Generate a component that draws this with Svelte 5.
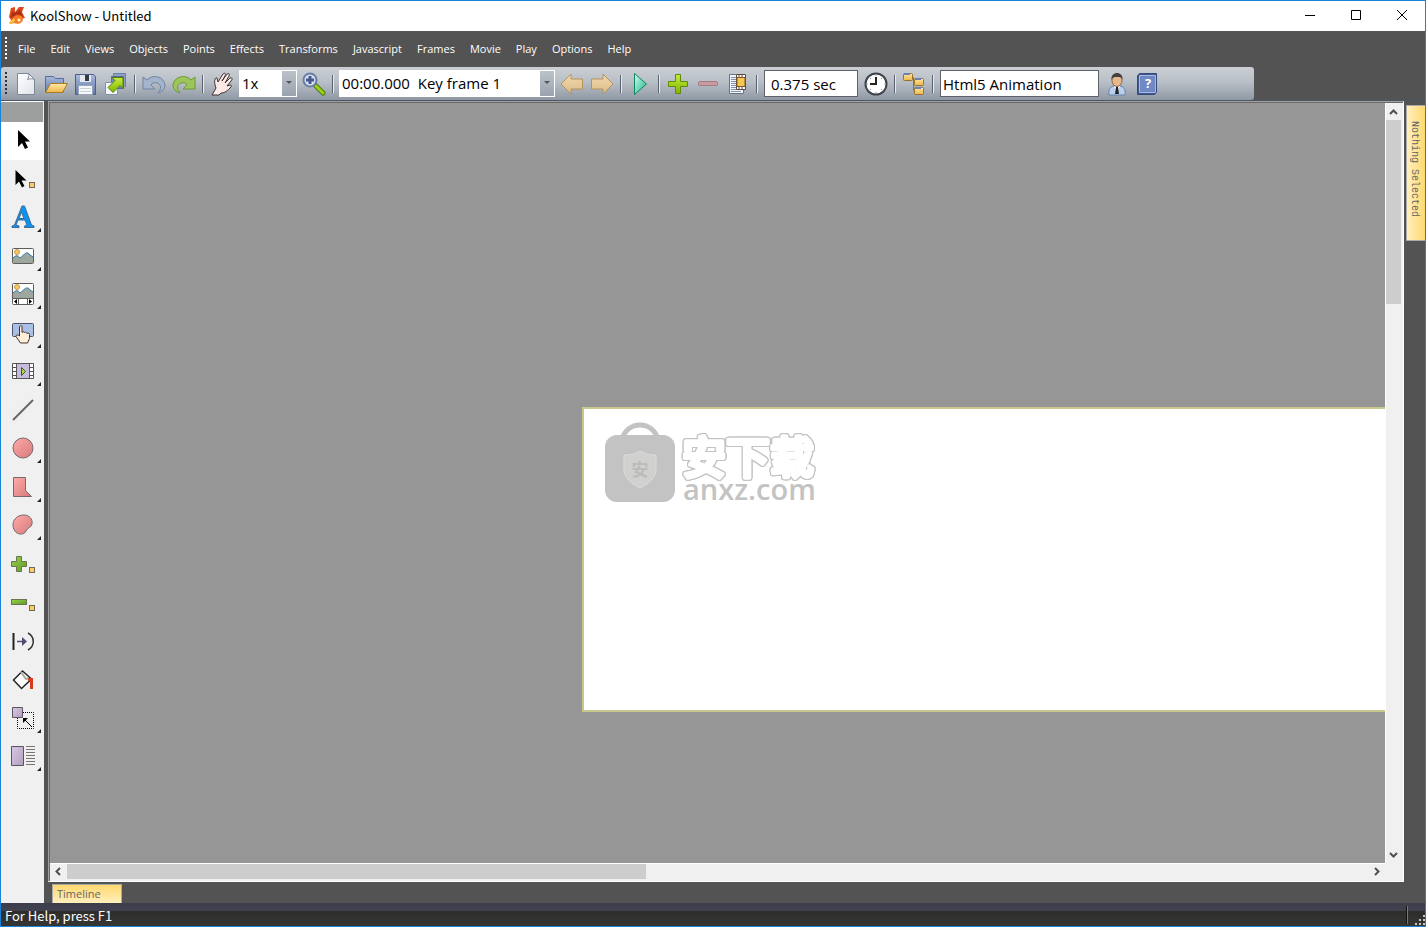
<script>
	const menus = [
		'File', 'Edit', 'Views', 'Objects', 'Points', 'Effects', 'Transforms',
		'Javascript', 'Frames', 'Movie', 'Play', 'Options', 'Help'
	];

	const zooms = ['1x', '2x', '4x', '8x'];
	const frames = ['00:00.000\u00a0\u00a0Key frame 1'];

	let zoom = $state('1x');
	let frame = $state(frames[0]);
	let duration = $state('0.375 sec');
	let target = $state('Html5 Animation');
	let activeTool = $state('Select');
</script>

<!-- shared gradients -->
<svg class="defs" width="0" height="0" aria-hidden="true">
	<defs>
		<linearGradient id="g-paper" x2="1" y2="1"><stop stop-color="#fff" /><stop offset="1" stop-color="#dfe3ea" /></linearGradient>
		<linearGradient id="g-folder" x2="0" y2="1"><stop stop-color="#ffe9a6" /><stop offset="1" stop-color="#eeb54a" /></linearGradient>
		<linearGradient id="g-steel" x2="0" y2="1"><stop stop-color="#a9b9dc" /><stop offset="1" stop-color="#5f78ad" /></linearGradient>
		<linearGradient id="g-lime" x2="0" y2="1"><stop stop-color="#c8ea3c" /><stop offset="1" stop-color="#7fb800" /></linearGradient>
		<linearGradient id="g-play" x2="1" y2="1"><stop stop-color="#d4fff0" /><stop offset="1" stop-color="#12b383" /></linearGradient>
		<linearGradient id="g-sand" x2="0" y2="1"><stop stop-color="#efd9b0" /><stop offset="1" stop-color="#dcbb86" /></linearGradient>
		<linearGradient id="g-pink" x2="1" y2="1"><stop stop-color="#ffaaa9" /><stop offset="1" stop-color="#d67a7b" /></linearGradient>
		<linearGradient id="g-lilac" x2="1" y2="1"><stop stop-color="#d9c8e2" /><stop offset="1" stop-color="#b19fc0" /></linearGradient>
		<linearGradient id="g-leaf" x2="1" y2="1"><stop stop-color="#9bd24c" /><stop offset="1" stop-color="#5a9a24" /></linearGradient>
	</defs>
</svg>

{#snippet iconNew()}
	<path d="M3.500 1.500h11l6 6v15h-17z" fill="url(#g-paper)" stroke="#7d8795" />
	<path d="M14.500 1.500c1 3 0 4-1 6 3-1 5-1 7 0z" fill="#fff" stroke="#7d8795" />
{/snippet}
{#snippet iconOpen()}
	<path d="M1.500 20V4.500h8l2 2h8V20z" fill="url(#g-steel)" stroke="#566c9c" />
	<path d="M1.500 20.500l5-9h17l-5 9z" fill="url(#g-folder)" stroke="#a87c25" />
{/snippet}
{#snippet iconSave()}
	<path d="M1.500 2.500h18l2 2v18h-20z" fill="url(#g-steel)" stroke="#4d5f88" />
	<path d="M6 3h11v7H6z" fill="#e4e8ee" /><path d="M11 3h4v6h-4z" fill="#333b48" />
	<path d="M4.500 13.500h14v9h-14z" fill="#f6f7f9" stroke="#99a4b8" />
	<path d="M6 16.500h11M6 19.500h11" stroke="#cbd1db" />
{/snippet}
{#snippet iconExport()}
	<path d="M9.500 1.500h12v13h-12z" fill="#8d9fc4" stroke="#6b7fa8" />
	<path d="M7.500 4.500h12v12h-12z" fill="#7189b8" stroke="#536c9d" />
	<path d="M1.500 10.500h12v12h-12z" fill="#f4f6f9" stroke="#8190ab" />
	<path d="M8 5.500h11v11l-3-3-7 7-5-5 7-7z" fill="url(#g-lime)" stroke="#52800a" />
{/snippet}
{#snippet iconUndo()}
	<path d="M1 5l4 3c5-6 17-4 18 5 0 4-3 7-7 8 4-4 3-9-1-10-3-1-5 0-6 2l4 4H1z" fill="#a5b4cd" stroke="#71839f" />
{/snippet}
{#snippet iconRedo()}
	<path d="M23 5l-4 3C14 2 2 4 1 13c0 4 3 7 7 8-4-4-3-9 1-10 3-1 5 0 6 2l-4 4h12z" fill="#9dc65a" stroke="#6d9a38" />
{/snippet}
{#snippet iconHand()}
	<path d="M2 23l4-7-1-3c-1-4 0-8 2-7l1 4 5-8c2-2 3 0 2 2l-3 5 5-7c2-1 3 0 2 2l-4 7 5-5c2-1 3 1 1 3l-4 5 3-1c2 0 2 1 0 3-4 4-6 5-9 5l-2 2z" fill="#fde9e6" stroke="#3a3434" />
{/snippet}
{#snippet iconZoom()}
	<path d="M14 14l7 7" stroke="#4b7a0c" stroke-width="5" stroke-linecap="round" />
	<path d="M14 14l7 7" stroke="#9ad21a" stroke-width="3" stroke-linecap="round" />
	<circle cx="8" cy="8" r="6.500" fill="#d5e0f2" stroke="#6a7ca4" stroke-width="2" />
	<path d="M8 4v8M4 8h8" stroke="#46588c" stroke-width="3" />
{/snippet}
{#snippet iconPrev()}
	<path d="M1 12L11 2v5h11.500v10H11v5z" fill="url(#g-sand)" stroke="#b5935d" />
{/snippet}
{#snippet iconNext()}
	<path d="M23 12L13 2v5H1.500v10H13v5z" fill="url(#g-sand)" stroke="#b5935d" />
{/snippet}
{#snippet iconPlay()}
	<path d="M6.500 1.500L18.500 12 6.500 22.500z" fill="url(#g-play)" stroke="#11835f" stroke-linejoin="round" />
{/snippet}
{#snippet iconPlus()}
	<path d="M9.500 2.500h5v7h7v5h-7v7h-5v-7h-7v-5h7z" fill="url(#g-lime)" stroke="#5c8c08" />
{/snippet}
{#snippet iconMinus()}
	<rect x="2.500" y="9.500" width="19" height="4" rx="1" fill="#c99a9e" stroke="#a27b82" />
{/snippet}
{#snippet iconFrames()}
	<path d="M3.500 2.500h14v19h-14z" fill="#f2f4f7" stroke="#6a7280" />
	<path d="M5 5.500h5M5 7.500h5M5 9.500h5M5 11.500h5M5 13.500h5M5 15.500h5M5 17.500h10M5 19.500h10" stroke="#7f91ae" />
	<path d="M10.500 2.500h9v15h-9z" fill="#fff" stroke="#5c4a3c" />
	<path d="M11 5.500h8v9h-8z" fill="#f9c74d" stroke="#7c5b2a" />
	<path d="M13 3v2M16 3v2M13 15v2M16 15v2" stroke="#5c4a3c" />
{/snippet}
{#snippet iconClock()}
	<circle cx="12" cy="12" r="10.500" fill="#fff" stroke="#3e444c" stroke-width="2" />
	<path d="M12 5v7H6" fill="none" stroke="#222" stroke-width="2" />
	<path d="M12 2v2M22 12h-2M12 22v-2M2 12h2M18 6l-1 1M18 18l-1-1M6 18l1-1M6 6l1 1" stroke="#999" />
{/snippet}
{#snippet iconTree()}
	<path d="M9 5.500h2.500v13H14M11 10.500h3" fill="none" stroke="#6e7686" />
	{#each [[1, 1], [12, 6], [12, 15]] as [x, y]}
		<rect x={x + 0.5} y={y + 0.5} width="9" height="7" rx="1" fill="url(#g-folder)" stroke="#9a722b" />
		<path d="M{x + 1} {y + 1}h6" stroke="#6b81b4" stroke-width="2" />
	{/each}
{/snippet}
{#snippet iconUser()}
	<path d="M4 23c-1-6 2-9 5-9h6c3 0 6 3 5 9z" fill="#b9cdec" stroke="#6780ad" />
	<path d="M9 14l3 8 3-8z" fill="#fff" /><path d="M11 15h2l1 7h-4z" fill="#20242c" />
	<ellipse cx="12" cy="8.500" rx="5" ry="6" fill="#e6b68c" stroke="#8d6745" />
	<path d="M6.500 8C6 3 9 1 12 1s6 2 5.500 7c-1-3-2-3-5.500-3S8 5 6.500 8z" fill="#45403d" />
{/snippet}
{#snippet iconHelp()}
	<path d="M2.500 3.500l2-2h17v19l-2 2h-17z" fill="#41598f" stroke="#34497c" />
	<path d="M4.500 3.500h16v17h-16z" fill="#7089c2" stroke="#a7b9df" />
	<text x="13" y="16" text-anchor="middle" class="qmark">?</text>
{/snippet}

{#snippet node()}
	<rect x="18.500" y="15.500" width="5" height="5" fill="#ffcb5e" stroke="#6f6a5c" />
{/snippet}
{#snippet toolSelect()}
	<path d="M7 2v17l4-4 3 6 3-1.500-3-6h5z" fill="#000" />
{/snippet}
{#snippet toolPoint()}
	<path d="M4.500 3v15L8 14.500l3 6 2.500-1.500-3-5.500h5z" fill="#000" />
	{@render node()}
{/snippet}
{#snippet toolText()}
	<path d="M11 1h2.500l7 19 2.500 1v1.500h-9.500V21l2.500-1-2-5H7l-2 5 3 1v1.500H1V21l2.500-1zM10.500 7L8 13.500h5z" fill="#0a92f5" fill-rule="evenodd" stroke="#3f6c92" />
{/snippet}
{#snippet toolImage()}
	<rect x="1.500" y="4.500" width="21" height="15" rx="1" fill="#fff" stroke="#5d5d5d" />
	<circle cx="6" cy="8" r="2.500" fill="#f9c865" stroke="#c79d52" />
	<path d="M2 14c3-3 5-3 7 0 4-3 7-8 10-3l3 2v6H2z" fill="#9da79d" />
	<path d="M2 14c3-3 5-3 7 0 4-3 7-8 10-3l3 2" fill="none" stroke="#3177ae" />
{/snippet}
{#snippet toolSlider()}
	<rect x="1.500" y="1.500" width="21" height="21" rx="1" fill="#fff" stroke="#5d5d5d" />
	<circle cx="6" cy="5" r="2.500" fill="#f9c865" stroke="#c79d52" />
	<path d="M2 11c3-3 5-3 7 0 4-3 7-8 10-3l3 2v6H2z" fill="#9da79d" />
	<path d="M2 11c3-3 5-3 7 0 4-3 7-8 10-3l3 2" fill="none" stroke="#3177ae" />
	<path d="M2 16.500h20M7.500 17v5M16.500 17v5" stroke="#5d5d5d" />
	<path d="M6 17v5l-3-2.500zM18 17v5l3-2.500z" fill="#000" />
{/snippet}
{#snippet toolButton()}
	<rect x="1.500" y="2.500" width="21" height="13" rx="1" fill="#a9bfe6" stroke="#4c566b" />
	<path d="M8.500 5.500c1-1 2.500-1 2.500 0v6c1-1 2-1 2.500 0 1-1 2 0 2.500 1 2-1 2.500 0 2.500 1v4l-2 4.500h-7L5 15.500c0-2 2-2 3.500-.5z" fill="#ffeeda" stroke="#40332a" />
{/snippet}
{#snippet toolMovie()}
	<path d="M1.500 4.500h21v15h-21z" fill="#fff" stroke="#555" />
	<path d="M6 5h12v14H6z" fill="#c6bbdf" />
	<path d="M5.500 5v14M18.500 5v14M2 8.500h3M2 12.500h3M2 16.500h3M19 8.500h3M19 12.500h3M19 16.500h3" stroke="#555" />
	<path d="M10.500 8.500l4 4-4 4z" fill="#a4d84b" stroke="#3f5b22" />
{/snippet}
{#snippet toolLine()}
	<path d="M2 22L22 2" stroke="#6b6466" stroke-width="2" />
{/snippet}
{#snippet toolEllipse()}
	<circle cx="12" cy="12" r="10" fill="url(#g-pink)" stroke="#756a6a" />
{/snippet}
{#snippet toolPolygon()}
	<path d="M2.500 2.500h12v13l6 6h-18z" fill="url(#g-pink)" stroke="#756a6a" />
{/snippet}
{#snippet toolBlob()}
	<path d="M2 12C2 5 8 2 13 2s9 4 8 9c-1 4-4 3-6 7-1 3-5 4-9 2-3-2-4-5-4-8z" fill="url(#g-pink)" stroke="#756a6a" />
{/snippet}
{#snippet toolAdd()}
	<path d="M5.500 4.500h5v5h5v5h-5v5h-5v-5h-5v-5h5z" fill="url(#g-leaf)" stroke="#68754f" />
	{@render node()}
{/snippet}
{#snippet toolRemove()}
	<rect x="0.500" y="9.500" width="15" height="5" fill="url(#g-leaf)" stroke="#68754f" />
	{@render node()}
{/snippet}
{#snippet toolMorph()}
	<path d="M2.500 4v17" stroke="#222" stroke-width="2" />
	<path d="M6 12.500h7" stroke="#534b74" stroke-width="1.500" /><path d="M11 8v9l5-4.500z" fill="#534b74" />
	<path d="M17 4c7 4 7 13 0 17" fill="none" stroke="#333" stroke-width="1.500" />
{/snippet}
{#snippet toolFill()}
	<path d="M2.500 13l9-9 9 8-10 9.500z" fill="#fff" stroke="#222" stroke-width="1.500" />
	<path d="M10 5l5 7 3-1" fill="none" stroke="#aaa" stroke-width="2" />
	<path d="M17 12.500h3.500V22" fill="none" stroke="#d93b1f" stroke-width="3" />
{/snippet}
{#snippet toolResize()}
	<path d="M6.500 6.500h16v16h-16z" fill="none" stroke="#000" stroke-dasharray="1 1" stroke-dashoffset="0.500" />
	<path d="M1.500 1.500h10v10h-10z" fill="url(#g-lilac)" stroke="#5b5363" />
	<path d="M13 13l8 8" stroke="#000" /><path d="M12 12h5l-5 5z" fill="#000" />
{/snippet}
{#snippet toolWrap()}
	<path d="M0.500 2.500h12v19h-12z" fill="url(#g-lilac)" stroke="#5b5363" />
	<path d="M15 2.500h9M15 5.500h9M15 8.500h9M15 11.500h9M15 14.500h9M15 17.500h9M15 20.500h9" stroke="#7d7470" />
{/snippet}

{#snippet action(label, icon)}
	<button class="action" type="button" aria-label={label}>
		<svg width="24" height="24" viewBox="0 0 24 24">{@render icon()}</svg>
	</button>
{/snippet}

{#snippet tool(label, icon, flyout)}
	<button
		class="tool"
		class:active={activeTool === label}
		type="button"
		aria-label={label}
		onclick={() => (activeTool = label)}
	>
		<svg width="24" height="24" viewBox="0 0 24 24" overflow="visible">{@render icon()}</svg>
		{#if flyout}<span class="flyout"></span>{/if}
	</button>
{/snippet}

{#snippet chevron(d)}
	<svg width="17" height="17" viewBox="0 0 17 17"><path {d} fill="none" stroke="#505050" stroke-width="2" /></svg>
{/snippet}

<div class="window">
	<header class="titlebar">
		<svg width="18" height="18" viewBox="0 0 18 18" aria-hidden="true">
			<path d="M3 1l4-1v5l4-5h5l-2 5 3 6-4 1-4-1-6 2-2-3z" fill="#d9481c" />
			<path d="M4 5l3 1 5-3 3 7-6-3-6 4z" fill="#a92f14" />
			<path d="M1 16l5-6c3-3 9-2 9 2s-5 6-9 4l-3 1z" fill="#f57c22" />
			<path d="M1 16l5-5 1 3-4 3z" fill="#ffc23c" />
			<circle cx="11" cy="13" r="1.500" fill="#fff0d8" />
		</svg>
		<h1>KoolShow - Untitled</h1>
		<div class="caption">
			<button type="button" aria-label="Minimize"><svg width="12" height="12" viewBox="0 0 12 12"><path d="M1 5.500h10" stroke="#000" /></svg></button>
			<button type="button" aria-label="Maximize"><svg width="12" height="12" viewBox="0 0 12 12"><path d="M1.500 0.500h9v9h-9z" fill="none" stroke="#000" /></svg></button>
			<button type="button" aria-label="Close"><svg width="12" height="12" viewBox="0 0 12 12"><path d="M1 0l10 10M11 0L1 10" stroke="#000" /></svg></button>
		</div>
	</header>

	<nav class="menubar">
		<span class="grip light"></span>
		{#each menus as item (item)}
			<button type="button">{item}</button>
		{/each}
	</nav>

	<div class="toolstrip">
		<div class="toolbar">
			<span class="grip"></span>
			{@render action('New', iconNew)}
			{@render action('Open', iconOpen)}
			{@render action('Save', iconSave)}
			{@render action('Export', iconExport)}
			<span class="sep"></span>
			{@render action('Undo', iconUndo)}
			{@render action('Redo', iconRedo)}
			<span class="sep"></span>
			{@render action('Pan', iconHand)}
			<span class="combo zoom">
				<select aria-label="Zoom" bind:value={zoom}>
					{#each zooms as z (z)}<option value={z}>{z}</option>{/each}
				</select>
			</span>
			{@render action('Zoom in', iconZoom)}
			<span class="sep"></span>
			<span class="combo frames">
				<select aria-label="Key frame" bind:value={frame}>
					{#each frames as f (f)}<option value={f}>{f}</option>{/each}
				</select>
			</span>
			{@render action('Previous frame', iconPrev)}
			{@render action('Next frame', iconNext)}
			<span class="sep"></span>
			{@render action('Play', iconPlay)}
			<span class="sep"></span>
			{@render action('Add frame', iconPlus)}
			{@render action('Remove frame', iconMinus)}
			{@render action('Frame list', iconFrames)}
			<span class="sep"></span>
			<input class="duration" aria-label="Duration" bind:value={duration} />
			{@render action('Timing', iconClock)}
			<span class="sep"></span>
			{@render action('Object tree', iconTree)}
			<span class="sep"></span>
			<input class="target" aria-label="Output" bind:value={target} />
			{@render action('Account', iconUser)}
			{@render action('Help contents', iconHelp)}
		</div>
	</div>

	<main>
		<aside class="toolbox">
			<div class="handle"></div>
			{@render tool('Select', toolSelect, false)}
			{@render tool('Edit points', toolPoint, false)}
			{@render tool('Text', toolText, true)}
			{@render tool('Image', toolImage, true)}
			{@render tool('Slider', toolSlider, true)}
			{@render tool('Button', toolButton, true)}
			{@render tool('Movie', toolMovie, true)}
			{@render tool('Line', toolLine, false)}
			{@render tool('Ellipse', toolEllipse, true)}
			{@render tool('Polygon', toolPolygon, true)}
			{@render tool('Curve', toolBlob, true)}
			{@render tool('Add point', toolAdd, false)}
			{@render tool('Remove point', toolRemove, false)}
			{@render tool('Bend', toolMorph, false)}
			{@render tool('Fill', toolFill, false)}
			{@render tool('Resize', toolResize, true)}
			{@render tool('Text wrap', toolWrap, true)}
		</aside>

		<section class="work">
			<div class="view">
				<div class="canvas">
					<div class="stage">
						<div class="logo">
							<svg width="72" height="82" viewBox="0 0 72 82" aria-hidden="true">
								<path d="M18 18C22-2 50-2 54 18" fill="none" stroke="#c3c3c3" stroke-width="5" />
								<rect x="1" y="13" width="70" height="67" rx="12" fill="#c3c3c3" />
								<path d="M36 29c5 3 10 4 16 4v15c0 8-8 14-16 18-8-4-16-10-16-18V33c6 0 11-1 16-4z" fill="#d0d0ce" stroke="#dcdcda" />
								<text x="36" y="54" text-anchor="middle" class="seal">安</text>
							</svg>
							<div class="brand">
								<svg width="138" height="44" viewBox="0 0 138 44" overflow="visible">
									<text x="2" y="40" class="cn">安下载</text>
								</svg>
								<span class="site">anxz.com</span>
							</div>
						</div>
					</div>
				</div>
				<div class="scroll vertical">
					{@render chevron('M4 11l3.500-3.500L11 11')}
					<div class="track"><div class="thumb"></div></div>
					{@render chevron('M4 7l3.500 3.500L11 7')}
				</div>
				<div class="scroll horizontal">
					{@render chevron('M10 4L6.500 7.500 10 11')}
					<div class="track"><div class="thumb"></div></div>
					{@render chevron('M7 4l3.500 3.500L7 11')}
				</div>
			</div>
			<div class="tabs"><button type="button">Timeline</button></div>
		</section>

		<aside class="dock"><button type="button">Nothing Selected</button></aside>
	</main>

	<footer>
		<span>For Help, press F1</span>
		<svg width="20" height="23" viewBox="0 0 20 23" aria-hidden="true">
			<path d="M1.500 3v18" stroke="#111" /><path d="M2.500 3v18" stroke="#77797c" />
			<path d="M18 12h2v2h-2zM14 16h2v2h-2zM18 16h2v2h-2zM10 20h2v2h-2zM14 20h2v2h-2zM18 20h2v2h-2z" fill="#c9c7c0" />
		</svg>
	</footer>
</div>

<style>
	.defs {
		position: absolute;
	}

	.window {
		box-sizing: border-box;
		min-height: 100vh;
		display: flex;
		flex-direction: column;
		border: 1px solid #1883d7;
		background: #535353;
		font-family: "Open Sans", "Noto Sans CJK SC", sans-serif;
		font-size: 12px;
		color: #000;
	}

	button,
	input,
	select {
		box-sizing: border-box;
		margin: 0;
		padding: 0;
		border: 0;
		border-radius: 0;
		background: none;
		font: inherit;
		color: inherit;
	}

	svg {
		display: block;
		flex: none;
	}

	/* title bar */
	.titlebar {
		height: 30px;
		padding-left: 7px;
		display: flex;
		align-items: center;
		gap: 4px;
		background: #fff;
	}

	h1 {
		margin: 0;
		flex: 1;
		font-family: "Noto Sans CJK SC", sans-serif;
		font-size: 13px;
		line-height: 16px;
		font-weight: 400;
	}

	.caption {
		display: flex;
	}

	.caption button {
		width: 46px;
		height: 30px;
		display: grid;
		place-items: center;
	}

	/* menu */
	.menubar {
		height: 36px;
		display: flex;
		align-items: center;
		gap: 1px;
		font-size: 11px;
		color: #fff;
	}

	.menubar button {
		padding: 0 7px;
		line-height: 20px;
	}

	.grip {
		width: 2px;
		height: 24px;
		margin: 0 4px;
		background: repeating-linear-gradient(#2d3238 0 2px, transparent 2px 4px);
	}

	.grip.light {
		margin-right: 3px;
		background: repeating-linear-gradient(#fff 0 2px, transparent 2px 4px);
	}

	/* toolbar */
	.toolstrip {
		display: flex;
		border-bottom: 1px solid #4b5565;
	}

	.toolbar {
		height: 33px;
		padding-right: 92px;
		display: flex;
		align-items: center;
		border-radius: 3px 3px 3px 0;
		background: linear-gradient(#cbcfd4, #b9bfc7 45%, #8f98a4);
	}

	.action {
		width: 30px;
		height: 30px;
		display: grid;
		place-items: center;
	}

	.qmark {
		font-size: 13px;
		font-weight: 700;
		fill: #fff;
	}

	.sep {
		width: 2px;
		height: 18px;
		margin: 0 3px;
		box-sizing: border-box;
		border-left: 1px solid #5a626e;
		border-right: 1px solid #e8ebee;
	}

	.combo {
		position: relative;
		margin: 0 2px;
	}

	.combo select {
		width: 100%;
		height: 27px;
		padding: 0 0 2px 3px;
		display: block;
		appearance: none;
		background: #fff;
		font-size: 15px;
	}

	.combo::before {
		content: "";
		position: absolute;
		top: 1px;
		right: 1px;
		width: 14px;
		height: 25px;
		background: linear-gradient(#bcc2c9, #9aa3ae);
		pointer-events: none;
	}

	.combo::after {
		content: "";
		position: absolute;
		top: 11px;
		right: 5px;
		border: 3px solid transparent;
		border-top-color: #555;
		border-bottom: 0;
		pointer-events: none;
	}

	.zoom {
		width: 58px;
	}

	.frames {
		width: 216px;
	}

	.toolbar input {
		height: 27px;
		margin: 0 3px;
		border: 1px solid #5f6369;
		background: #fff;
		font-size: 15px;
	}

	.duration {
		width: 94px;
		padding-left: 6px;
	}

	.target {
		width: 159px;
		padding-left: 2px;
	}

	/* body */
	main {
		flex: 1;
		display: flex;
	}

	.toolbox {
		width: 43px;
		background: #f0f0f0;
	}

	.handle {
		height: 20px;
		margin-right: 1px;
		border-top: 1px solid #fff;
		background: #9d9f9e;
	}

	.tool {
		position: relative;
		width: 100%;
		height: 38px;
		padding: 0 0 2px 10px;
		display: flex;
		align-items: center;
	}

	.tool:nth-child(odd) {
		height: 39px;
	}

	.tool.active {
		background: #fff;
	}

	.flyout {
		position: absolute;
		right: 3px;
		bottom: 5px;
		border: 2px solid #222;
		border-top-color: transparent;
		border-left-color: transparent;
	}

	.work {
		flex: 1;
		min-width: 0;
		margin-left: 4px;
		display: flex;
		flex-direction: column;
	}

	.view {
		flex: 1;
		display: grid;
		grid-template: 1fr 17px / minmax(0, 1fr) 17px;
		border: 1px solid #a0a0a0;
		border-right-color: #fff;
		border-bottom-color: #fff;
		box-shadow: inset 1px 1px #696969;
		padding: 1px;
		background: #f0f0f0;
	}

	.canvas {
		padding: 304px 0 0 532px;
		background: #969696;
		overflow: hidden;
	}

	.stage {
		box-sizing: border-box;
		height: 305px;
		padding: 13px 20px;
		border: 2px solid #c8c88e;
		border-right: 0;
		background: #fff;
	}

	.logo {
		display: flex;
		gap: 4px;
	}

	.seal {
		font-size: 17px;
		font-weight: 700;
		fill: #bcbcba;
	}

	.brand {
		padding-top: 12px;
		display: flex;
		flex-direction: column;
		color: #c3c3c3;
	}

	.cn {
		font-family: "Noto Sans CJK SC", sans-serif;
		font-size: 44px;
		font-weight: 500;
		fill: #fff;
		stroke: #fff;
		stroke-width: 4px;
		stroke-linejoin: round;
		filter: drop-shadow(1px 0 #c3c3c3) drop-shadow(-1px 0 #c3c3c3) drop-shadow(0 1px #c3c3c3) drop-shadow(0 -1px #c3c3c3);
	}

	.site {
		padding-left: 3px;
		font-size: 29px;
		line-height: 22px;
		font-weight: 600;
	}

	.scroll {
		display: flex;
		background: #f0f0f0;
	}

	.vertical {
		flex-direction: column;
		border-left: 1px solid #fff;
	}

	.horizontal {
		border-top: 1px solid #fff;
	}

	.track {
		flex: 1;
		display: flex;
	}

	.thumb {
		background: #cdcdcd;
	}

	.vertical .track {
		flex-direction: column;
	}

	.vertical .thumb {
		width: 15px;
		height: 184px;
	}

	.horizontal .thumb {
		width: 579px;
		height: 15px;
	}

	.tabs {
		height: 21px;
		padding: 2px 4px 0;
		box-sizing: border-box;
	}

	.tabs button {
		width: 70px;
		height: 19px;
		padding-left: 4px;
		display: block;
		border: 1px solid #a9a9a9;
		border-bottom: 0;
		background: linear-gradient(#ffd86f, #fff0bd);
		font-size: 11px;
		line-height: 18px;
		text-align: left;
		color: #666;
	}

	.dock {
		width: 21px;
		padding: 4px 0 0 2px;
		box-sizing: border-box;
	}

	.dock button {
		width: 19px;
		height: 136px;
		padding: 15px 4px 0 0;
		display: block;
		border: 1px solid #a9a9a9;
		border-right: 0;
		background: linear-gradient(90deg, #fff0bd, #ffd86f);
		font-family: "Liberation Mono", monospace;
		font-size: 10px;
		line-height: 14px;
		writing-mode: vertical-rl;
		text-align: left;
		color: #666;
	}

	footer {
		height: 23px;
		padding-left: 4px;
		display: flex;
		align-items: center;
		justify-content: space-between;
		background: linear-gradient(#3c3f4b, #40434f 8px, #2d2d2c 8px, #353533);
		font-family: "Noto Sans CJK SC", sans-serif;
		font-size: 13px;
		line-height: 16px;
		color: #fff;
	}

	footer span {
		padding-top: 2px;
	}
</style>
